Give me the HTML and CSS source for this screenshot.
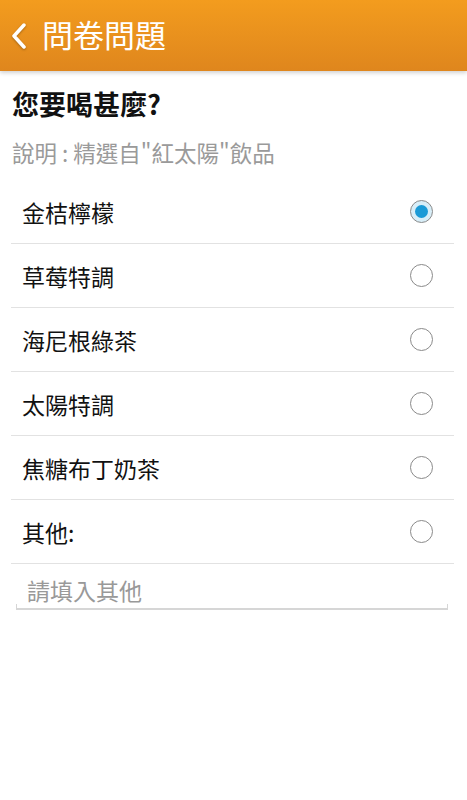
FILE: index.html
```html
<!DOCTYPE html>
<html lang="zh-Hant">

<head>
    <meta charset="UTF-8">
    <title>問卷問題</title>
    <link rel="stylesheet" href="styles.css">
</head>

<body>

    <header class="topbar">
        <svg class="back" width="20" height="30" viewBox="0 0 20 30">
            <polyline points="15,4 5,15 15,26" fill="none" stroke="#fff" stroke-width="3.5" stroke-linecap="round" stroke-linejoin="round"/>
        </svg>
        <span class="title">問卷問題</span>
    </header>

    <main class="content">
        <h1 class="question">您要喝甚麼?</h1>
        <p class="hint">說明 : 精選自"紅太陽"飲品</p>

        <ul class="options">
            <li class="option"><span>金桔檸檬</span><span class="radio checked"></span></li>
            <li class="option"><span>草莓特調</span><span class="radio"></span></li>
            <li class="option"><span>海尼根綠茶</span><span class="radio"></span></li>
            <li class="option"><span>太陽特調</span><span class="radio"></span></li>
            <li class="option"><span>焦糖布丁奶茶</span><span class="radio"></span></li>
            <li class="option"><span>其他:</span><span class="radio"></span></li>
        </ul>

        <div class="other">
            <input type="text" placeholder="請填入其他">
        </div>
    </main>

</body>

</html>
```

FILE: styles.css
```css
* {
    font-family: "Noto Sans CJK TC", "Noto Sans", sans-serif;
    box-sizing: border-box;
}

body {
    margin: 0;
    background: #fff;
}

.topbar {
    height: 71px;
    display: flex;
    align-items: center;
    padding-left: 9px;
    gap: 13px;
    background: linear-gradient(#f39c1e, #df861d);
    box-shadow: 0 2px 4px rgba(0, 0, 0, 0.18);
}

.back {
    filter: drop-shadow(0 1px 1px rgba(0, 0, 0, 0.3));
}

.title {
    color: #fff;
    font-size: 31px;
    line-height: 1;
    margin-top: -4px;
}

.content {
    padding: 0 13px 0 11px;
}

.question {
    margin: 16px 0 0 1px;
    font-size: 27px;
    line-height: 34px;
    font-weight: bold;
    color: #111;
}

.hint {
    margin: 16px 0 0 1px;
    font-size: 22.5px;
    line-height: 30px;
    color: #9a9a9a;
}

.options {
    list-style: none;
    margin: 13px 0 0;
    padding: 0;
}

.option {
    height: 64px;
    display: flex;
    align-items: center;
    justify-content: space-between;
    padding: 0 21px 0 11px;
    border-bottom: 1px solid #e2e2e2;
    font-size: 23px;
    color: #111;
}

.radio {
    width: 23px;
    height: 23px;
    border: 1.5px solid #8a8a8a;
    border-radius: 50%;
    display: flex;
    align-items: center;
    justify-content: center;
}

.radio.checked {
    background: #d8eef8;
}

.radio.checked::after {
    content: "";
    width: 13px;
    height: 13px;
    border-radius: 50%;
    background: #1a9ad6;
}

.other {
    margin: 0 6px 0 5px;
    background:
        linear-gradient(#d6d6d6, #d6d6d6) left bottom / 1px 6px no-repeat,
        linear-gradient(#d6d6d6, #d6d6d6) right bottom / 1px 6px no-repeat;
}

.other input {
    display: block;
    width: 100%;
    height: 46px;
    border: none;
    border-bottom: 2px solid #d6d6d6;
    padding: 8px 11px 0;
    font-size: 23px;
    color: #111;
    outline: none;
    background: transparent;
}

.other input::placeholder {
    color: #999;
}
```
